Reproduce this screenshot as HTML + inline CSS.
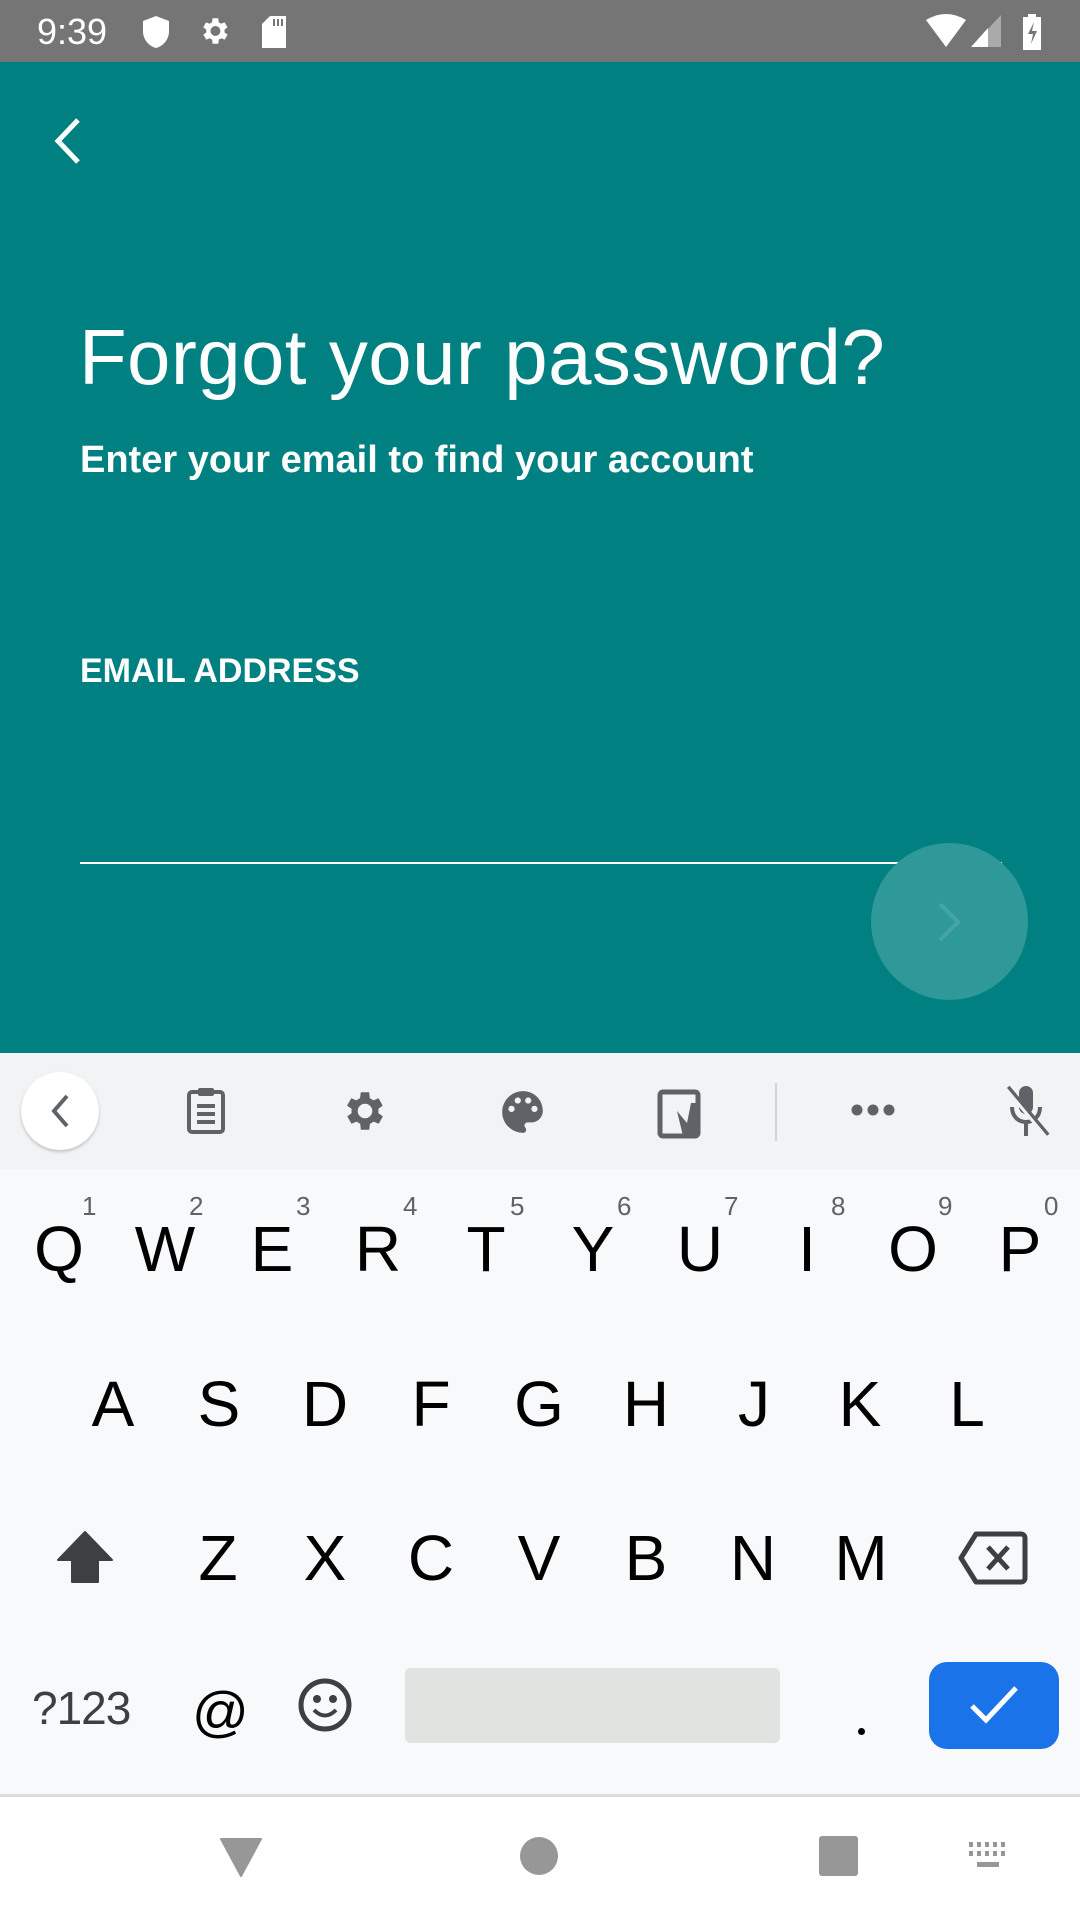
<!DOCTYPE html>
<html><head><meta charset="utf-8"><style>
*{margin:0;padding:0;box-sizing:border-box}
body{width:1080px;height:1920px;position:relative;overflow:hidden;font-family:"Liberation Sans",sans-serif;background:#fff}
.abs{position:absolute}
.sb{left:0;top:0;width:1080px;height:62px;background:#757575;color:#fff}
.teal{left:0;top:62px;width:1080px;height:991px;background:#008080}
.tb{left:0;top:1053px;width:1080px;height:116px;background:#f1f3f4}
.kb{left:0;top:1169px;width:1080px;height:627px;background:#f8f9fa}
.key{position:absolute;width:108px;text-align:center;font-size:64px;color:#000;transform:translateY(-50%);line-height:1}
.num{position:absolute;font-size:26px;color:#5f6368}
</style></head><body>
<div class="abs sb">
 <div class="abs" style="left:37px;top:11px;font-size:36px">9:39</div>
 <svg class="abs" style="left:142px;top:15px" width="28" height="34" viewBox="0 0 28 34"><path d="M14 1 L27 6 V16 C27 25 21 31 14 33 C7 31 1 25 1 16 V6Z" fill="#fff"/></svg>
 <svg class="abs" style="left:197px;top:14px" width="34" height="34" viewBox="0 0 24 24"><path fill="#fff" d="M19.4 13a7.5 7.5 0 000-2l2.1-1.6-2-3.5-2.5 1a7 7 0 00-1.7-1L15 3h-4l-.4 2.9a7 7 0 00-1.7 1l-2.5-1-2 3.5L6.6 11a7.5 7.5 0 000 2l-2.1 1.6 2 3.5 2.5-1a7 7 0 001.7 1L11 21h4l.4-2.9a7 7 0 001.7-1l2.5 1 2-3.5zM13 15.5a3.5 3.5 0 110-7 3.5 3.5 0 010 7z"/></svg>
 <svg class="abs" style="left:260px;top:15px" width="28" height="34" viewBox="0 0 28 34"><path d="M10 1H26V33H2V9Z" fill="#fff"/><path d="M14 4v7M18 4v7M22 4v7" stroke="#757575" stroke-width="2"/></svg>
 <svg class="abs" style="left:925px;top:14px" width="42" height="34" viewBox="0 0 42 34"><path d="M1 6 Q21 -6 41 6 L21 33Z" fill="#fff"/></svg>
 <svg class="abs" style="left:970px;top:14px" width="32" height="34" viewBox="0 0 32 34"><path d="M31 1V33H1Z" fill="#aaa"/><path d="M18 14V33H1L18 14Z" fill="#fff"/></svg>
 <svg class="abs" style="left:1022px;top:14px" width="20" height="36" viewBox="0 0 20 36"><path d="M6 0h8v3h5v33H1V3h5z" fill="#fff"/><path d="M12 8 6 20h5l-2 10 6-13h-5z" fill="#757575"/></svg>
</div>
<div class="abs teal">
 <svg class="abs" style="left:50px;top:54px" width="34" height="50" viewBox="0 0 34 50"><path d="M28 4 L8 25 L28 46" stroke="#fff" stroke-width="5" fill="none"/></svg>
 <div class="abs" style="left:79px;top:250px;font-size:78px;color:#fff;white-space:nowrap;letter-spacing:0.4px">Forgot your password?</div>
 <div class="abs" style="left:80px;top:377px;font-size:38px;font-weight:bold;color:#fff;white-space:nowrap;letter-spacing:0px">Enter your email to find your account</div>
 <div class="abs" style="left:80px;top:590px;font-size:34px;font-weight:bold;color:#fff;white-space:nowrap;letter-spacing:0px">EMAIL ADDRESS</div>
 <div class="abs" style="left:80px;top:800px;width:922px;height:2px;background:#fff"></div>
 <div class="abs" style="left:871px;top:781px;width:157px;height:157px;border-radius:50%;background:#2f9898"></div>
 <svg class="abs" style="left:936px;top:838px" width="26" height="44" viewBox="0 0 26 44"><path d="M4 4 L22 22 L4 40" stroke="#46a4a4" stroke-width="4" fill="none"/></svg>
</div>
<div class="abs tb">
 <div class="abs" style="left:21px;top:19px;width:78px;height:78px;border-radius:50%;background:#fff;box-shadow:0 2px 3px rgba(0,0,0,.2)"></div>
 <svg class="abs" style="left:48px;top:40px" width="24" height="36" viewBox="0 0 24 36"><path d="M19 3 L6 18 L19 33" stroke="#5f6368" stroke-width="4" fill="none"/></svg>
 <svg class="abs" style="left:186px;top:33px" width="40" height="48" viewBox="0 0 40 48"><rect x="3" y="6" width="34" height="40" rx="3" fill="none" stroke="#5f6368" stroke-width="4"/><rect x="12" y="2" width="16" height="8" rx="2" fill="#5f6368"/><path d="M11 20h18M11 28h18M11 36h18" stroke="#5f6368" stroke-width="4"/></svg>
 <svg class="abs" style="left:340px;top:33px" width="50" height="50" viewBox="0 0 24 24"><path fill="#5f6368" d="M19.4 13a7.5 7.5 0 000-2l2.1-1.6-2-3.5-2.5 1a7 7 0 00-1.7-1L15 3h-4l-.4 2.9a7 7 0 00-1.7 1l-2.5-1-2 3.5L6.6 11a7.5 7.5 0 000 2l-2.1 1.6 2 3.5 2.5-1a7 7 0 001.7 1L11 21h4l.4-2.9a7 7 0 001.7-1l2.5 1 2-3.5zM13 15.5a3.5 3.5 0 110-7 3.5 3.5 0 010 7z" transform="translate(-1 0)"/></svg>
 <svg class="abs" style="left:498px;top:34px" width="50" height="50" viewBox="0 0 24 24"><path fill="#5f6368" d="M12 2C6.5 2 2 6.5 2 12s4.5 10 10 10c.9 0 1.5-.7 1.5-1.5 0-.4-.1-.7-.4-1-.2-.3-.4-.6-.4-1 0-.8.7-1.5 1.5-1.5H16c3 0 5.5-2.5 5.5-5.5C21.5 6 17.2 2 12 2zM6.5 12a1.5 1.5 0 110-3 1.5 1.5 0 010 3zm3-4a1.5 1.5 0 110-3 1.5 1.5 0 010 3zm5 0a1.5 1.5 0 110-3 1.5 1.5 0 010 3zm3 4a1.5 1.5 0 110-3 1.5 1.5 0 010 3z"/></svg>
 <svg class="abs" style="left:657px;top:36px" width="46" height="50" viewBox="0 0 46 50"><rect x="3" y="3" width="38" height="44" rx="3" fill="none" stroke="#5f6368" stroke-width="5"/><path d="M20 22 L30 34 L34 14 L42 14 L42 47 L26 47Z" fill="#5f6368"/></svg>
 <div class="abs" style="left:775px;top:30px;width:2px;height:58px;background:#d0d2d5"></div>
 <svg class="abs" style="left:850px;top:50px" width="46" height="14" viewBox="0 0 46 14"><circle cx="7" cy="7" r="5.5" fill="#5f6368"/><circle cx="23" cy="7" r="5.5" fill="#5f6368"/><circle cx="39" cy="7" r="5.5" fill="#5f6368"/></svg>
 <svg class="abs" style="left:1002px;top:30px" width="50" height="56" viewBox="0 0 50 56"><rect x="17" y="3" width="14" height="28" rx="7" fill="#5f6368"/><path d="M10 24c0 9 6 15 14 15s14-6 14-15M24 39v14" stroke="#5f6368" stroke-width="4" fill="none"/><path d="M6 4 L46 52" stroke="#5f6368" stroke-width="4"/><path d="M4 6 L44 54" stroke="#f1f3f4" stroke-width="3"/></svg>
</div>
<div class="abs kb">
 <div style="position:absolute;top:80px;left:0;width:1080px">
  <div class="key" style="left:5px">Q</div><div class="key" style="left:111px">W</div><div class="key" style="left:218px">E</div><div class="key" style="left:324px">R</div><div class="key" style="left:432px">T</div><div class="key" style="left:539px">Y</div><div class="key" style="left:646px">U</div><div class="key" style="left:753px">I</div><div class="key" style="left:859px">O</div><div class="key" style="left:966px">P</div>
 </div>
 <div class="num" style="left:82px;top:22px">1</div><div class="num" style="left:189px;top:22px">2</div><div class="num" style="left:296px;top:22px">3</div><div class="num" style="left:403px;top:22px">4</div><div class="num" style="left:510px;top:22px">5</div><div class="num" style="left:617px;top:22px">6</div><div class="num" style="left:724px;top:22px">7</div><div class="num" style="left:831px;top:22px">8</div><div class="num" style="left:938px;top:22px">9</div><div class="num" style="left:1044px;top:22px">0</div>
 <div style="position:absolute;top:235px;left:0;width:1080px">
  <div class="key" style="left:59px">A</div><div class="key" style="left:165px">S</div><div class="key" style="left:271px">D</div><div class="key" style="left:377px">F</div><div class="key" style="left:485px">G</div><div class="key" style="left:592px">H</div><div class="key" style="left:700px">J</div><div class="key" style="left:806px">K</div><div class="key" style="left:913px">L</div>
 </div>
 <div style="position:absolute;top:389px;left:0;width:1080px">
  <div class="key" style="left:164px">Z</div><div class="key" style="left:271px">X</div><div class="key" style="left:377px">C</div><div class="key" style="left:485px">V</div><div class="key" style="left:592px">B</div><div class="key" style="left:699px">N</div><div class="key" style="left:807px">M</div>
 </div>
 <svg class="abs" style="left:56px;top:361px" width="58" height="54" viewBox="0 0 58 54"><path d="M29 2 L56 30 H42 V52 H16 V30 H2Z" fill="#3c4043" stroke="#3c4043" stroke-width="2" stroke-linejoin="round"/></svg>
 <svg class="abs" style="left:958px;top:362px" width="70" height="54" viewBox="0 0 70 54"><path d="M18 3 H63 A4 4 0 0 1 67 7 V47 A4 4 0 0 1 63 51 H18 L3 27Z" fill="none" stroke="#3c4043" stroke-width="5" stroke-linejoin="round"/><path d="M30 16 L50 38 M50 16 L30 38" stroke="#3c4043" stroke-width="5"/></svg>
 <div class="abs" style="left:32px;top:512px;font-size:46px;color:#3c4043;letter-spacing:-1px">?123</div>
 <div class="abs" style="left:192px;top:510px;font-size:56px;color:#000">@</div>
 <svg class="abs" style="left:297px;top:508px" width="56" height="56" viewBox="0 0 56 56"><circle cx="28" cy="28" r="24" fill="none" stroke="#3c4043" stroke-width="5"/><circle cx="20" cy="22" r="4" fill="#3c4043"/><circle cx="36" cy="22" r="4" fill="#3c4043"/><path d="M17 33 Q28 44 39 33" stroke="#3c4043" stroke-width="4" fill="none"/></svg>
 <div class="abs" style="left:405px;top:499px;width:375px;height:75px;border-radius:6px;background:#e1e3e1"></div>
 <div class="abs" style="left:858px;top:559px;width:7px;height:7px;border-radius:50%;background:#000"></div>
 <div class="abs" style="left:929px;top:493px;width:130px;height:87px;border-radius:18px;background:#1a73e8"></div>
 <svg class="abs" style="left:968px;top:515px" width="52" height="42" viewBox="0 0 52 42"><path d="M4 22 L18 36 L48 4" stroke="#fff" stroke-width="5" fill="none"/></svg>
</div>
<div class="abs" style="left:0;top:1794px;width:1080px;height:3px;background:#dadce0"></div>
<div class="abs" style="left:0;top:1797px;width:1080px;height:123px;background:#fff">
 <svg class="abs" style="left:219px;top:40px" width="44" height="40" viewBox="0 0 44 40"><path d="M2 2 H42 L22 39Z" fill="#979797" stroke="#979797" stroke-width="2" stroke-linejoin="round"/></svg>
 <div class="abs" style="left:520px;top:40px;width:38px;height:38px;border-radius:50%;background:#979797"></div>
 <div class="abs" style="left:819px;top:39px;width:39px;height:40px;border-radius:3px;background:#979797"></div>
 <svg class="abs" style="left:968px;top:44px" width="42" height="30" viewBox="0 0 42 30"><g fill="#979797"><rect x="1" y="1" width="4" height="5"/><rect x="9" y="1" width="4" height="5"/><rect x="17" y="1" width="4" height="5"/><rect x="25" y="1" width="4" height="5"/><rect x="33" y="1" width="4" height="5"/><rect x="1" y="10" width="4" height="5"/><rect x="9" y="10" width="4" height="5"/><rect x="17" y="10" width="4" height="5"/><rect x="25" y="10" width="4" height="5"/><rect x="33" y="10" width="4" height="5"/><rect x="9" y="21" width="22" height="5"/></g></svg>
</div>
</body></html>
